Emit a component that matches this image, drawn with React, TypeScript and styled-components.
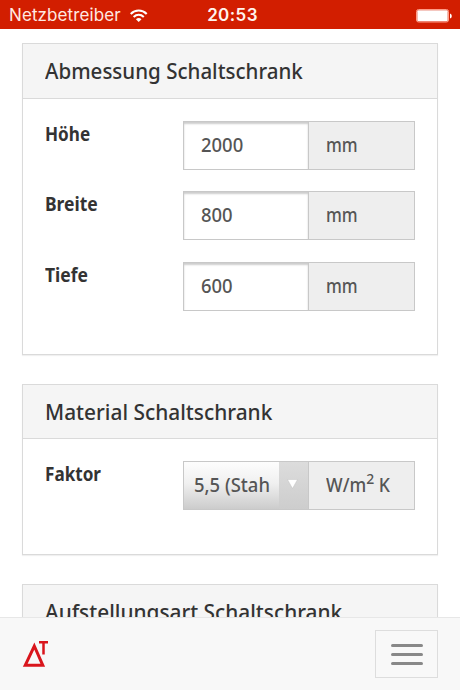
import React from 'react';
import styled, { createGlobalStyle } from 'styled-components';

const GlobalStyle = createGlobalStyle`
  * { box-sizing: border-box; }
  html, body { margin: 0; padding: 0; background: #fff; }
`;

const Screen = styled.div`
  display: flex;
  flex-direction: column;
  width: 460px;
  height: 690px;
  overflow: hidden;
  background: #fff;
  color: #333;
  font-family: 'Noto Sans', 'Open Sans', sans-serif;
`;

const StatusBar = styled.header`
  flex: none;
  display: grid;
  grid-template-columns: 1fr auto 1fr;
  align-items: center;
  height: 29px;
  padding: 2px 8px 0 9px;
  background: #d21e00;
  color: #fff;
  font: 400 17px/27px Inter, sans-serif;
`;

const Carrier = styled.div`
  display: flex;
  align-items: center;
  gap: 9px;
  color: #ffe9e2;
  letter-spacing: 0.1px;
`;

const Clock = styled.time`
  padding-left: 4px;
  font-weight: 600;
  letter-spacing: 0.4px;
  color: #fff3ee;
`;

const BatterySlot = styled.div`
  display: flex;
  justify-content: flex-end;
`;

const Content = styled.main`
  flex: 1;
  min-height: 0;
  overflow: hidden;
  display: flex;
  flex-direction: column;
  gap: 29px;
  padding: 14px 22px 0;
`;

const Panel = styled.section<{ $height: number }>`
  flex: none;
  height: ${(p) => p.$height}px;
  border: 1px solid #dadada;
  box-shadow: 0 1px 1px rgba(0, 0, 0, 0.06);
  background: #fff;
`;

const PanelHeading = styled.h2<{ $height?: number }>`
  margin: 0;
  height: ${(p) => p.$height ?? 55}px;
  padding-left: 22px;
  border-bottom: 1px solid #dadada;
  background: #f5f5f5;
  font-size: 22px;
  font-weight: 500;
  line-height: 53px;
  white-space: nowrap;
`;

const Condensed = styled.span<{ $scale: number }>`
  display: inline-block;
  white-space: nowrap;
  transform: scaleX(${(p) => p.$scale});
  transform-origin: left center;
`;

const PanelBody = styled.div`
  display: flex;
  flex-direction: column;
  gap: 21.4px;
  padding: 22px 22px 0;
`;

const FieldRow = styled.div`
  display: grid;
  grid-template-columns: 138px 232px;
  height: 49px;
`;

const Label = styled.label`
  font-size: 19px;
  font-weight: 700;
  line-height: 26px;
`;

const InputGroup = styled.div`
  display: grid;
  grid-template-columns: 124px 1fr;
  border: 1px solid #c8c8c8;
  color: #555;
  font-size: 19px;
  font-weight: 500;
  line-height: 46px;
`;

const Value = styled.div`
  padding-left: 17px;
  background: #fff;
  box-shadow: inset 0 2px 2px rgba(0, 0, 0, 0.2);
`;

const Unit = styled.div`
  padding-left: 17px;
  border-left: 1px solid #c8c8c8;
  background: #eee;
  white-space: nowrap;

  sup {
    font-size: 15px;
    line-height: 0;
    vertical-align: 8px;
  }
`;

const Select = styled.div`
  display: grid;
  grid-template-columns: 95px 29px;
  background: linear-gradient(#fdfdfd, #f0f0f0 45%, #ccc);
`;

const SelectText = styled.div`
  margin: 0 9px 0 10px;
  overflow: hidden;
  line-height: 47px;
`;

const SelectArrow = styled.div`
  display: flex;
  align-items: center;
  justify-content: center;
  padding: 0 2px 4px 0;
  background: linear-gradient(#dcdcdc, #cdcdcd);
`;

const Footer = styled.footer`
  flex: none;
  display: flex;
  justify-content: space-between;
  height: 73px;
  padding: 12px 22px 0;
  border-top: 1px solid #e7e7e7;
  background: #f8f8f8;
`;

const Logo = styled.svg`
  margin-top: 10px;
`;

const MenuButton = styled.button`
  display: flex;
  flex-direction: column;
  align-items: center;
  justify-content: center;
  gap: 6px;
  width: 63px;
  height: 48px;
  padding: 0;
  border: 1px solid #ddd;
  background: transparent;
`;

const MenuLine = styled.span`
  width: 32px;
  height: 3px;
  border-radius: 1.5px;
  background: #888;
`;

const dimensions = [
  { label: 'Höhe', value: '2000', scale: 0.9 },
  { label: 'Breite', value: '800', scale: 0.92 },
  { label: 'Tiefe', value: '600', scale: 0.92 },
];

export default function App() {
  return (
    <>
      <GlobalStyle />
      <Screen>
        <StatusBar>
          <Carrier>
            Netzbetreiber
            <svg width="18" height="14" viewBox="0 0 18 14" fill="none" stroke="#fff" strokeWidth="2.1">
              <path d="M.7 5C5.200 .4 12.200 .4 16.700 5" />
              <path d="M3.600 8C6.700 5.200 10.700 5.200 13.800 8" />
              <path d="M8.700 13 5.900 10.200Q8.700 7.900 11.500 10.200Z" fill="#fff" stroke="none" />
            </svg>
          </Carrier>
          <Clock>20:53</Clock>
          <BatterySlot>
            <svg width="36" height="14" viewBox="0 0 36 14">
              <rect x=".5" y=".5" width="32" height="12.500" rx="2" fill="none" stroke="#ff9d88" />
              <rect x="1.300" y="1.300" width="30.400" height="11" rx="1" fill="#fff" />
              <path d="M34 4.500Q35.800 5 35.800 7T34 9.500Z" fill="#fff" />
            </svg>
          </BatterySlot>
        </StatusBar>
        <Content>
          <Panel $height={312}>
            <PanelHeading><Condensed $scale={0.933}>Abmessung Schaltschrank</Condensed></PanelHeading>
            <PanelBody>
              {dimensions.map((d) => (
                <FieldRow key={d.label}>
                  <Label><Condensed $scale={d.scale}>{d.label}</Condensed></Label>
                  <InputGroup>
                    <Value><Condensed $scale={0.97}>{d.value}</Condensed></Value>
                    <Unit><Condensed $scale={0.88}>mm</Condensed></Unit>
                  </InputGroup>
                </FieldRow>
              ))}
            </PanelBody>
          </Panel>
          <Panel $height={171}>
            <PanelHeading $height={54}><Condensed $scale={0.948}>Material Schaltschrank</Condensed></PanelHeading>
            <PanelBody>
              <FieldRow>
                <Label><Condensed $scale={0.9}>Faktor</Condensed></Label>
                <InputGroup>
                  <Select>
                    <SelectText><Condensed $scale={0.97}>5,5 (Stahl)</Condensed></SelectText>
                    <SelectArrow>
                      <svg width="11" height="10" viewBox="0 0 11 10"><path d="M.5 .5H10.500L5.500 9.500Z" fill="#fff" stroke="#bbb" strokeWidth=".4" /></svg>
                    </SelectArrow>
                  </Select>
                  <Unit><Condensed $scale={0.93}>W/m<sup>2</sup> K</Condensed></Unit>
                </InputGroup>
              </FieldRow>
            </PanelBody>
          </Panel>
          <Panel $height={170}>
            <PanelHeading><Condensed $scale={0.946}>Aufstellungsart Schaltschrank</Condensed></PanelHeading>
          </Panel>
        </Content>
        <Footer>
          <Logo width="27" height="28" viewBox="0 0 27 28" fill="none" stroke="#d9151c">
            <path d="M3.200 25.300 12.300 6 20.800 25.300Z" strokeWidth="3" />
            <path d="M17 2.200H26M21.500 2.200V14.500" strokeWidth="2.500" />
          </Logo>
          <MenuButton aria-label="Menü"><MenuLine /><MenuLine /><MenuLine /></MenuButton>
        </Footer>
      </Screen>
    </>
  );
}
